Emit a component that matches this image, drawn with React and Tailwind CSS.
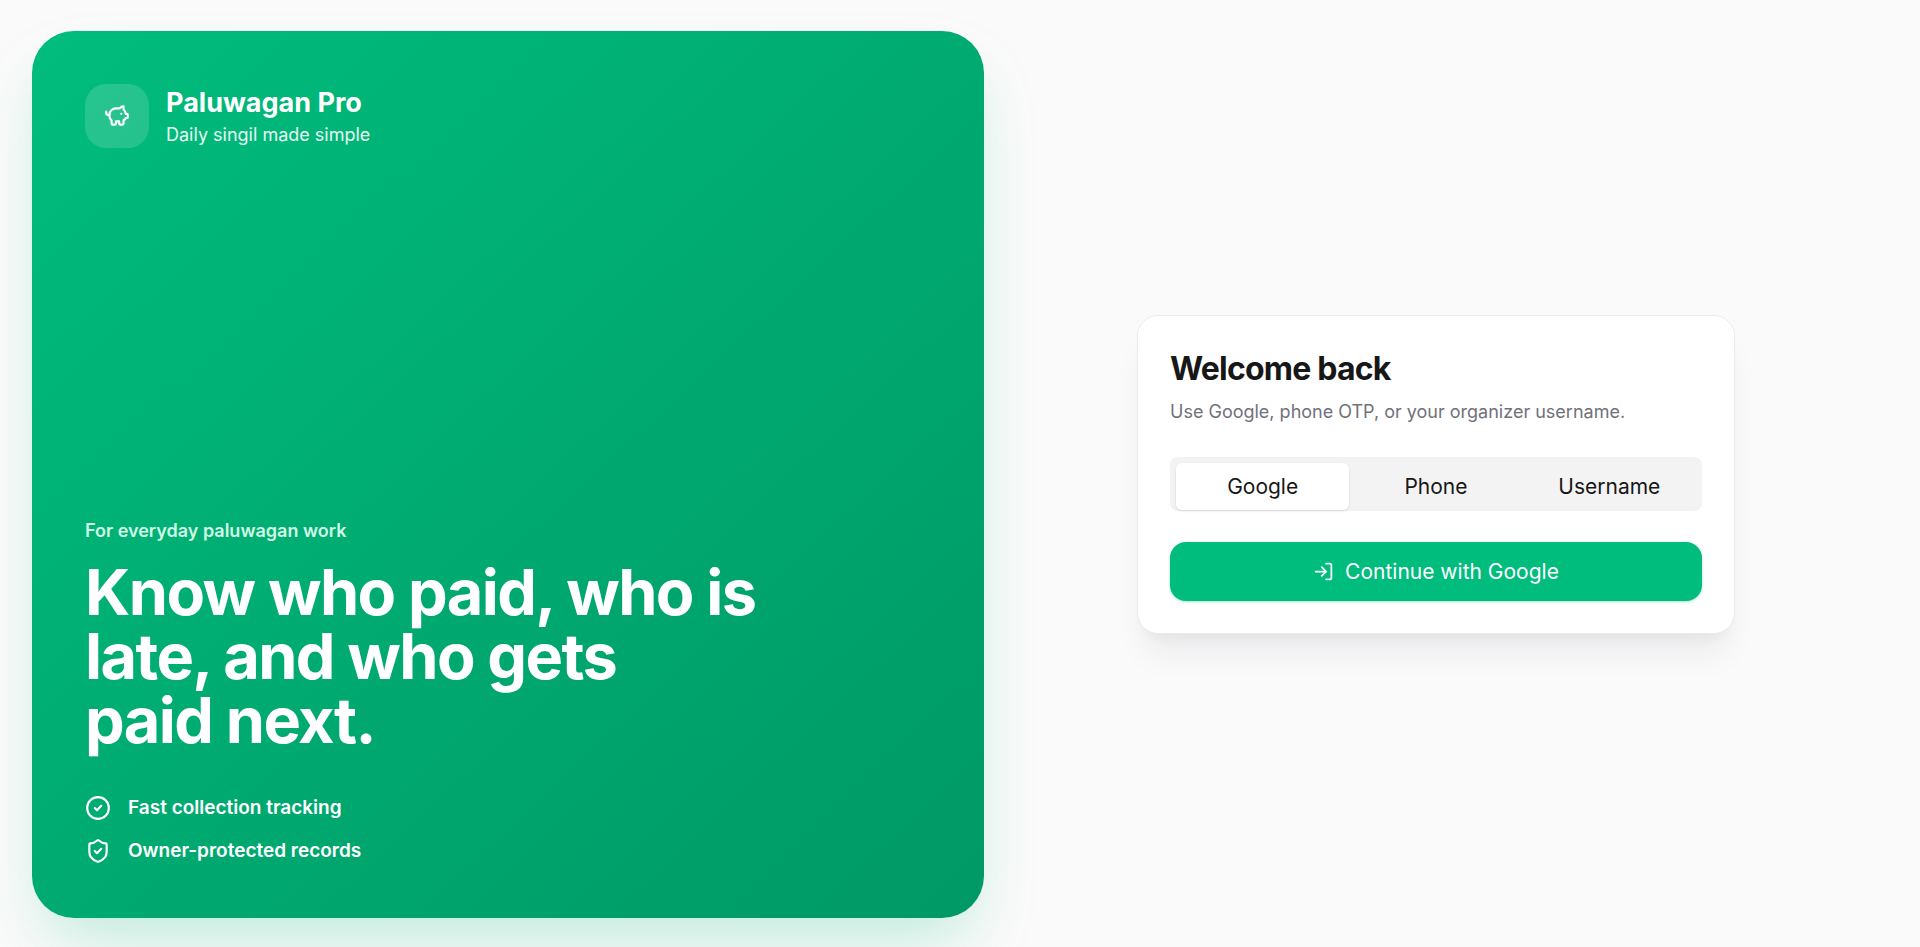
import React, { useState } from 'react';
import { CircleCheck, LogIn, PiggyBank, ShieldCheck } from 'lucide-react';
import clsx from 'clsx';

const features = [
    { icon: CircleCheck, label: 'Fast collection tracking' },
    { icon: ShieldCheck, label: 'Owner-protected records' }
];

const tabs = ['Google', 'Phone', 'Username'];

const BrandPanel = () => (
    <section className="flex flex-col justify-between rounded-[42px] bg-linear-to-br from-emerald-500 to-emerald-600 px-[53px] pt-[53px] pb-[54px] text-white shadow-[0_33px_66px_-16px_rgba(0,188,125,0.25)]">
        <div className="flex items-center gap-[17px]">
            <div className="flex size-16 items-center justify-center rounded-[21px] bg-white/15">
                <PiggyBank className="size-[26px]" />
            </div>
            <div>
                <p className="text-[27px] leading-[38px] font-bold">Paluwagan Pro</p>
                <p className="text-lg leading-[26px] text-white/90">Daily singil made simple</p>
            </div>
        </div>

        <div>
            <p className="text-lg leading-[26px] font-semibold text-emerald-100">For everyday paluwagan work</p>
            <h1 className="mt-4 max-w-[690px] text-[63px] leading-[64px] font-bold tracking-tight">
                Know who paid, who is late, and who gets paid&nbsp;next.
            </h1>
            <ul className="mt-[42px] space-y-4">
                {features.map(({ icon: Icon, label }) => (
                    <li key={label} className="flex items-center gap-[17px] text-[19px] leading-[27px] font-semibold">
                        <Icon className="size-[26px]" />
                        {label}
                    </li>
                ))}
            </ul>
        </div>
    </section>
);

const LoginCard = () => {
    const [active, setActive] = useState('Google');

    return (
        <div className="w-full max-w-[598px] rounded-[21px] border border-[#ebebeb] bg-white p-8 shadow-[0_27px_33px_-7px_rgba(24,24,50,0.06),0_11px_13px_-8px_rgba(24,24,50,0.05)]">
            <h2 className="text-[32px] leading-[42px] font-bold tracking-tight text-neutral-900">Welcome back</h2>
            <p className="mt-2 text-lg leading-7 text-zinc-500">Use Google, phone OTP, or your organizer username.</p>

            <div role="tablist" className="mt-[31px] grid h-[54px] grid-cols-3 rounded-lg bg-[#f3f3f3] px-1.5 pt-1.5">
                {tabs.map(tab => (
                    <button
                        key={tab}
                        type="button"
                        role="tab"
                        aria-selected={active === tab}
                        onClick={() => setActive(tab)}
                        className={clsx(
                            'h-[47px] rounded-md text-[21px] text-neutral-900',
                            active === tab && 'bg-white shadow-sm'
                        )}
                    >
                        {tab}
                    </button>
                ))}
            </div>

            <button
                type="button"
                className="mt-[31px] flex h-[59px] w-full items-center justify-center gap-[11px] rounded-2xl bg-emerald-500 text-[21px] text-white shadow-sm shadow-emerald-500/30"
            >
                <LogIn className="size-[21px]" />
                Continue with Google
            </button>
        </div>
    );
};

export default function App() {
    return (
        <main className="grid min-h-screen grid-cols-[119fr_113fr] bg-[#fafafa] px-8 pt-[31px] pb-[29px] font-['Inter',sans-serif]">
            <BrandPanel />
            <div className="flex items-center justify-center">
                <LoginCard />
            </div>
        </main>
    );
}
